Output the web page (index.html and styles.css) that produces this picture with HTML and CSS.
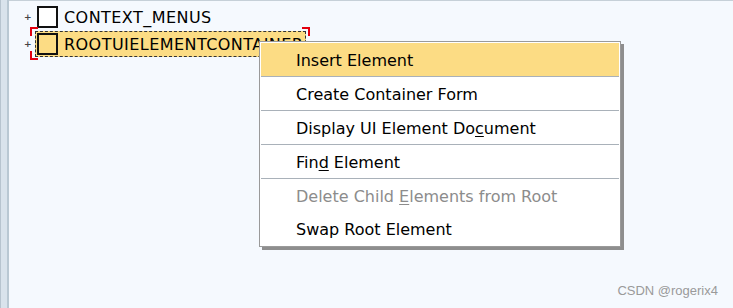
FILE: index.html
```html
<!DOCTYPE html>
<html>
<head>
<meta charset="utf-8">
<link rel="stylesheet" href="styles.css">
</head>
<body>
<div class="screen">
  <div class="sidebar"></div>
  <div class="canvas">
    <div class="tree">
      <div class="node">
        <span class="expander">+</span>
        <span class="box"></span>
        <span class="label">CONTEXT_MENUS</span>
      </div>
      <div class="node selected">
        <span class="expander">+</span>
        <span class="sel">
          <span class="box"></span>
          <span class="label">ROOTUIELEMENTCONTAINER</span>
          <span class="corner tl"></span>
          <span class="corner bl"></span>
          <span class="corner tr"></span>
        </span>
      </div>
    </div>
    <div class="menu">
      <div class="item active">Insert Element</div>
      <div class="item">Create Container Form</div>
      <div class="item">Display UI Element Do<u>c</u>ument</div>
      <div class="item">Fin<u>d</u> Element</div>
      <div class="item disabled nosep">Delete Child <u>E</u>lements from Root</div>
      <div class="item last">Swap Root Element</div>
    </div>
    <div class="watermark">CSDN @rogerix4</div>
  </div>
</div>
</body>
</html>
```

FILE: styles.css
```css
html, body {
  margin: 0;
  padding: 0;
}
body {
  width: 733px;
  height: 308px;
  overflow: hidden;
  background: #f5f9fe;
  font-family: "DejaVu Sans", Tahoma, sans-serif;
}
.screen {
  display: flex;
  width: 733px;
  height: 308px;
}
.sidebar {
  width: 6px;
  flex: none;
  background: #d9e3ec;
  border-left: 1px solid #b7c4cf;
  border-right: 2px solid #b9c8d3;
}
.canvas {
  position: relative;
  flex: 1;
  border-top: 1px solid #c6d0d8;
}
.tree {
  display: flex;
  flex-direction: column;
  padding: 4px 0 0 15px;
  gap: 3px;
}
.node {
  display: flex;
  align-items: center;
  height: 24px;
}
.expander {
  width: 13px;
  font-size: 9px;
  color: #444;
  line-height: 9px;
  font-weight: bold;
}
.box {
  width: 17px;
  height: 18px;
  border: 2px solid #111;
  background: #fff;
  flex: none;
}
.label {
  margin-left: 6px;
  font-size: 16px;
  color: #000;
  letter-spacing: 0.45px;
}
.sel {
  position: relative;
  display: flex;
  align-items: center;
  margin-left: -2px;
  padding: 1px 2px 1px 1px;
  height: 22px;
  background: #fcdc84;
  border: 1px dashed #333;
}
.sel .box {
  background: #fcdc84;
}
.corner {
  position: absolute;
  width: 6px;
  height: 7px;
  border-color: #e3000f;
  border-style: solid;
  border-width: 0;
}
.corner.tl {
  left: -6px;
  top: -5px;
  border-left-width: 2px;
  border-top-width: 2px;
}
.corner.bl {
  left: -6px;
  bottom: -4px;
  border-left-width: 2px;
  border-bottom-width: 2px;
}
.corner.tr {
  right: -5px;
  top: -5px;
  border-right-width: 2px;
  border-top-width: 2px;
}
.menu {
  position: absolute;
  left: 250px;
  top: 40px;
  width: 358px;
  padding: 1px;
  background: #fff;
  border: 1px solid #9a9a9a;
  box-shadow: 3px 3px 0 #8e8e8e;
}
.item {
  height: 33px;
  line-height: 35px;
  padding-left: 35px;
  font-size: 16px;
  color: #000;
  border-bottom: 1px solid #a9b1b9;
}
.item u {
  text-underline-offset: 2px;
}
.item.active {
  background: #fcdc84;
}
.item.disabled {
  color: #8c8c8c;
}
.item.nosep {
  border-bottom-color: transparent;
}
.item.last {
  border-bottom: none;
  height: 32px;
  line-height: 33px;
}
.watermark {
  position: absolute;
  right: 15px;
  bottom: 10px;
  font-family: "Liberation Sans", Arial, sans-serif;
  font-size: 13px;
  color: #9a9a9a;
}
```
